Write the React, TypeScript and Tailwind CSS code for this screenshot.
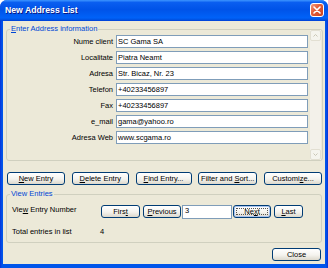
import React from 'react';

const fields = [
  { label: 'Nume client', value: 'SC Gama SA' },
  { label: 'Localitate', value: 'Piatra Neamt' },
  { label: 'Adresa', value: 'Str. Bicaz, Nr. 23' },
  { label: 'Telefon', value: '+40233456897' },
  { label: 'Fax', value: '+40233456897' },
  { label: 'e_mail', value: 'gama@yahoo.ro' },
  { label: 'Adresa Web', value: 'www.scgama.ro' },
];

function Btn({ w, children, isDefault }: { w: string; children: React.ReactNode; isDefault?: boolean }) {
  return (
    <button
      className={`relative ${w} h-[13px] shrink-0 flex items-center justify-center rounded-[3px] border border-[#003C74] bg-[linear-gradient(180deg,#FFFFFF_0%,#F4F3EE_55%,#DCD8CC_100%)] text-[7.5px] leading-none text-black ${
        isDefault ? 'shadow-[inset_0_0_0_1px_#A9C4F0]' : ''
      }`}
    >
      {children}
      {isDefault && <span className="absolute inset-[2px] border border-dotted border-[#555]" />}
    </button>
  );
}

function Legend({ children }: { children: React.ReactNode }) {
  return (
    <span className="absolute -top-[5px] left-[3px] bg-[#ECE9D8] px-[1px] text-[7.5px] leading-none text-[#0046D5]">
      {children}
    </span>
  );
}

export default function App() {
  return (
    <div className="w-[328px] h-[268px] flex flex-col rounded-t-[7px] overflow-hidden bg-[linear-gradient(90deg,#0831D9_0px,#0055EA_2px,#0055EA_326px,#0831D9_328px)] font-['Liberation_Sans',Arial,sans-serif] select-none">
      {/* Title bar */}
      <div className="h-[21px] shrink-0 flex items-center pl-[5px] pr-[4px] bg-[linear-gradient(180deg,#3D95FF_0%,#0A5EF0_12%,#0053E8_45%,#0062F8_85%,#0050E0_95%,#003DD7_100%)]">
        <span className="text-[8.7px] font-bold leading-none text-white [text-shadow:1px_1px_0_#0A1883]">
          New Address List
        </span>
        <div className="ml-auto w-[14px] h-[14px] mb-[1px] rounded-[3px] border border-white bg-[linear-gradient(135deg,#F29D7F_0%,#E35F3B_40%,#C8421E_100%)] flex items-center justify-center">
          <svg width="8" height="8" viewBox="0 0 8 8">
            <path d="M1 1L7 7M7 1L1 7" stroke="white" strokeWidth="1.6" strokeLinecap="round" />
          </svg>
        </div>
      </div>

      {/* Body */}
      <div className="flex-1 mx-[3px] mb-[4px] bg-[#ECE9D8] flex flex-col">
        {/* Enter Address information */}
        <div className="relative mt-[8px] ml-[3px] mr-[2px] h-[132px] shrink-0 rounded-[3px] border border-[#D0D0BF] flex">
          <Legend>
            <u className="no-underline">
              <span className="underline">E</span>nter Address information
            </u>
          </Legend>
          <div className="flex flex-col gap-[3px] pt-[5px]">
            {fields.map((f) => (
              <div key={f.label} className="flex items-center h-[13px]">
                <span className="w-[106px] text-right text-[7.5px] leading-none text-black">{f.label}</span>
                <div className="ml-[3px] w-[192px] h-[13px] border border-[#7F9DB9] bg-white flex items-center pl-[1px] text-[7.5px] leading-none text-black">
                  {f.value}
                </div>
              </div>
            ))}
          </div>
          {/* Scrollbar (disabled) */}
          <div className="ml-auto mr-[1px] w-[11px] flex flex-col justify-between bg-[#F3F1EA]">
            <div className="h-[11px] rounded-[2px] border border-[#E2DFD2] bg-[#F5F4EE] flex items-center justify-center">
              <svg width="5" height="3" viewBox="0 0 5 3">
                <path d="M0.5 2.5L2.5 0.5L4.5 2.5" stroke="#C9C6B6" strokeWidth="1" fill="none" />
              </svg>
            </div>
            <div className="h-[11px] rounded-[2px] border border-[#E2DFD2] bg-[#F5F4EE] flex items-center justify-center">
              <svg width="5" height="3" viewBox="0 0 5 3">
                <path d="M0.5 0.5L2.5 2.5L4.5 0.5" stroke="#C9C6B6" strokeWidth="1" fill="none" />
              </svg>
            </div>
          </div>
        </div>

        {/* Action buttons */}
        <div className="mt-[11px] ml-[4px] mr-[3px] flex justify-between">
          <Btn w="w-[58px]">
            <span><u>N</u>ew Entry</span>
          </Btn>
          <Btn w="w-[57px]">
            <span><u>D</u>elete Entry</span>
          </Btn>
          <Btn w="w-[56px]">
            <span><u>F</u>ind Entry...</span>
          </Btn>
          <Btn w="w-[59px]">
            <span>Filter and <u>S</u>ort...</span>
          </Btn>
          <Btn w="w-[58px]">
            <span>Customi<u>z</u>e...</span>
          </Btn>
        </div>

        {/* View Entries */}
        <div className="relative mt-[9px] ml-[3px] mr-[3px] h-[49px] shrink-0 rounded-[3px] border border-[#D0D0BF] flex flex-col pl-[5px] pt-[10px]">
          <Legend>View Entries</Legend>
          <div className="flex items-start">
            <span className="w-[89px] pt-[1px] text-[7.5px] leading-none text-black">
              Vie<u>w</u> Entry Number
            </span>
            <Btn w="w-[39px]">
              <span>Firs<u>t</u></span>
            </Btn>
            <div className="ml-[3px]">
              <Btn w="w-[38px]">
                <span><u>P</u>revious</span>
              </Btn>
            </div>
            <div className="ml-[1px] w-[50px] h-[14px] border border-[#7F9DB9] bg-white pl-[2px] pt-[1px] text-[7.5px] leading-none text-black">
              3
            </div>
            <div className="ml-[1px]">
              <Btn w="w-[38px]" isDefault>
                <span>Ne<u>x</u>t</span>
              </Btn>
            </div>
            <div className="ml-[3px]">
              <Btn w="w-[29px]">
                <span><u>L</u>ast</span>
              </Btn>
            </div>
          </div>
          <div className="mt-[9px] flex items-center text-[7.5px] leading-none text-black">
            <span className="w-[88px]">Total entries in list</span>
            <span>4</span>
          </div>
        </div>

        {/* Close */}
        <div className="mt-[5px] mr-[4px] self-end">
          <Btn w="w-[49px]">
            <span>Close</span>
          </Btn>
        </div>
      </div>
    </div>
  );
}
